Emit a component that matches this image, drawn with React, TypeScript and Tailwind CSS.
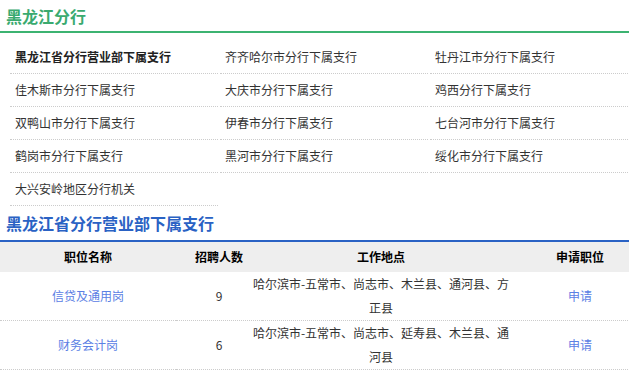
const branches = [
  "黑龙江省分行营业部下属支行",
  "齐齐哈尔市分行下属支行",
  "牡丹江市分行下属支行",
  "佳木斯市分行下属支行",
  "大庆市分行下属支行",
  "鸡西分行下属支行",
  "双鸭山市分行下属支行",
  "伊春市分行下属支行",
  "七台河市分行下属支行",
  "鹤岗市分行下属支行",
  "黑河市分行下属支行",
  "绥化市分行下属支行",
  "大兴安岭地区分行机关",
];

const jobs = [
  { name: "信贷及通用岗", count: 9, place: "哈尔滨市-五常市、尚志市、木兰县、通河县、方正县" },
  { name: "财务会计岗", count: 6, place: "哈尔滨市-五常市、尚志市、延寿县、木兰县、通河县" },
];

export default function App() {
  return (
    <div
      className="h-[373px] w-[629px] overflow-hidden bg-white text-[12px] text-[#333]"
      style={{ fontFamily: '"Microsoft YaHei", "Noto Sans CJK SC", sans-serif' }}
    >
      <div className="w-[660px]">
        {/* 分行标题 */}
        <div className="flex h-[33px] items-center border-b-2 border-[#3cb371] pl-[6px] text-[16px] font-bold text-[#3aaa6f]">
          黑龙江分行
        </div>

        {/* 支行列表 */}
        <div className="mt-[8px] ml-[10px] grid grid-cols-[repeat(3,210px)]">
          {branches.map((b, i) => (
            <div
              key={b}
              className={
                "mr-[2px] flex h-[33px] items-center border-b border-dotted border-[#ccc] pl-[5px] " +
                (i === 0 ? "font-bold text-[#222]" : "")
              }
            >
              {b}
            </div>
          ))}
        </div>

        {/* 营业部标题 */}
        <div className="flex h-[36px] items-center border-b-2 border-[#2a62c4] pl-[6px] text-[16px] font-bold text-[#2a62c4]">
          黑龙江省分行营业部下属支行
        </div>

        {/* 岗位表 */}
        <div className="grid grid-cols-[176px_86px_238px_160px]">
          <div className="flex h-[30px] items-center justify-center bg-[#eeeeee] font-bold text-black">职位名称</div>
          <div className="flex h-[30px] items-center justify-center bg-[#eeeeee] font-bold text-black">招聘人数</div>
          <div className="flex h-[30px] items-center justify-center bg-[#eeeeee] font-bold text-black">工作地点</div>
          <div className="flex h-[30px] items-center justify-center bg-[#eeeeee] font-bold text-black">申请职位</div>
          {jobs.map((j) => (
            <div key={j.name} className="contents">
              <div className="flex h-[49px] items-center justify-center border-b border-dotted border-[#ccc] text-[#5b80e4]">
                {j.name}
              </div>
              <div className="flex h-[49px] items-center justify-center border-b border-dotted border-[#ccc]">
                {j.count}
              </div>
              <div className="flex h-[49px] items-center justify-center border-b border-dotted border-[#ccc]">
                <div className="w-[262px] shrink-0 text-center leading-[24px]">{j.place}</div>
              </div>
              <div className="flex h-[49px] items-center justify-center border-b border-dotted border-[#ccc] text-[#5b80e4]">
                申请
              </div>
            </div>
          ))}
        </div>
      </div>
    </div>
  );
}
